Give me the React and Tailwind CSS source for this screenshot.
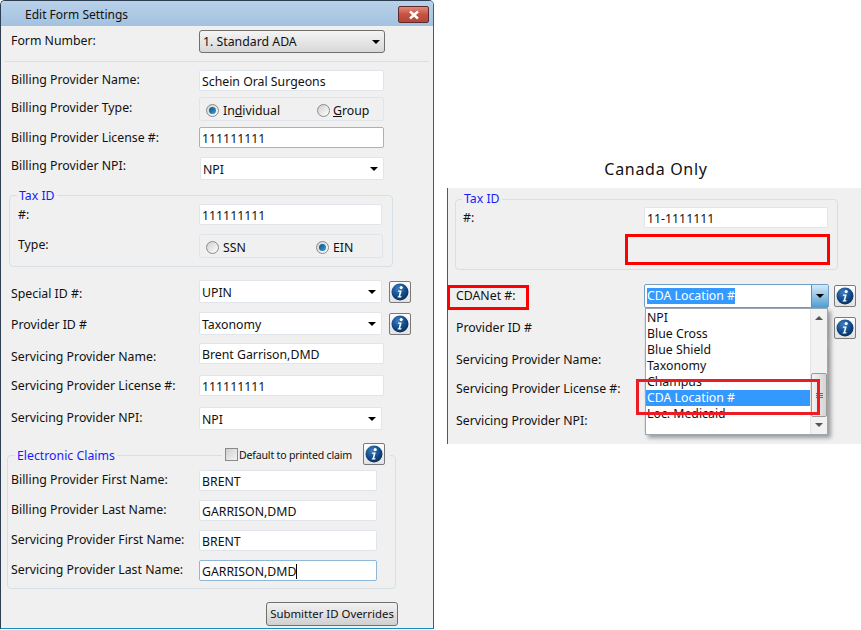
import { useId } from "react";

const ui = "font-['Noto_Sans',sans-serif] text-[12.3px] leading-[16px] text-[#111]";

function Field({ value, className = "w-[185px]", focused = false, caret = false }) {
  return (
    <div
      className={`h-[21px] bg-white rounded-[2px] border pl-[2px] leading-[21px] whitespace-nowrap ${
        focused ? "border-[#8fb8d8]" : "border-[#dfe5ea]"
      } ${className}`}
    >
      {value}
      {caret && <span className="inline-block w-px h-[15px] bg-black align-[-3px]" />}
    </div>
  );
}

function Arrow() {
  return <div className="w-0 h-0 border-x-[4px] border-x-transparent border-t-[4px] border-t-black" />;
}

function Select({ value, className = "w-[184px]" }) {
  return (
    <div
      className={`h-[23px] bg-white rounded-[2px] border border-[#dfe5ea] pl-[2px] pr-[3px] flex items-center justify-between ${className}`}
    >
      <span className="pt-[2px]">{value}</span>
      <span className="mr-[2px]">
        <Arrow />
      </span>
    </div>
  );
}

function Info({ className = "" }) {
  const id = useId();
  return (
    <div
      className={`w-[22px] h-[22px] shrink-0 rounded-[2px] border border-[#7a7a7a] bg-gradient-to-b from-white to-[#e2e2e2] flex items-center justify-center ${className}`}
    >
      <svg width="18" height="18" viewBox="0 0 18 18">
        <defs>
          <radialGradient id={id} cx="0.4" cy="0.3" r="0.8">
            <stop offset="0" stopColor="#3f7fc0" />
            <stop offset="0.6" stopColor="#0f4585" />
            <stop offset="1" stopColor="#07284f" />
          </radialGradient>
        </defs>
        <circle cx="9" cy="9" r="8.5" fill={`url(#${id})`} />
        <circle cx="10.2" cy="4.6" r="1.6" fill="#fff" />
        <path d="M7 7.6h3.7L9.2 13.2h1.4l-.3 1.2H6.6l.3-1.2h.8l1-4.4H6.8z" fill="#fff" />
      </svg>
    </div>
  );
}

function Radio({ checked }) {
  return (
    <div className="w-[13px] h-[13px] rounded-full border border-[#8a8a8a] bg-gradient-to-br from-[#d0d0d0] to-white flex items-center justify-center">
      {checked && <div className="w-[7px] h-[7px] rounded-full bg-gradient-to-br from-[#0a4f80] to-[#3aa0e0]" />}
    </div>
  );
}

function RadioGroup({ children, className = "w-[185px] h-[24px]" }) {
  return (
    <div className={`rounded-[2px] border border-[#dfe5ea] bg-[#f0f0f0] pt-[2px] flex items-center ${className}`}>
      {children}
    </div>
  );
}

function Row({ label, labelClass = "w-[188px] pt-[3px]", className = "", children }) {
  return (
    <div className={`flex items-start ${className}`}>
      <div className={`shrink-0 whitespace-nowrap ${labelClass}`}>{label}</div>
      {children}
    </div>
  );
}

function Legend({ text, className }) {
  return <div className={`absolute bg-[#f0f0f0] px-[2px] text-[#1a1aff] ${className}`}>{text}</div>;
}

function TitleBar() {
  return (
    <div className="h-[25px] shrink-0 bg-gradient-to-b from-[#b9d1ea] to-[#a3c2e0] flex items-start justify-between">
      <div className="pl-[24px] pt-[6px] text-[12px]">Edit Form Settings</div>
      <div className="mt-[5px] mr-[4px] w-[31px] h-[17px] rounded-[2px] border border-[#5c2a2a] bg-gradient-to-b from-[#e08a7c] via-[#c9503f] to-[#b0483c] flex items-center justify-center">
        <svg width="12" height="10" viewBox="0 0 12 10">
          <path d="M2 1.5L10 8.5M10 1.5L2 8.5" stroke="#fff" strokeWidth="2.4" fill="none" />
        </svg>
      </div>
    </div>
  );
}

function EditWindow() {
  return (
    <div className="w-[434px] h-[629px] shrink-0 rounded-t-[5px] border border-[#2c3e50] border-r-[#0e6f9c] border-b-[#0e8fc0] bg-[#f0f0f0] flex flex-col overflow-hidden">
      <TitleBar />
      <div className="pl-[10px] pt-[4px]">
        <Row label="Form Number:">
          <div className="w-[186px] h-[23px] rounded-[3px] border border-[#6f6f6f] bg-gradient-to-b from-[#f4f4f4] to-[#d8d8d8] pl-[3px] pr-[4px] flex items-center justify-between">
            <span>1. Standard ADA</span>
            <Arrow />
          </div>
        </Row>
      </div>
      <div className="h-px bg-[#d5dfe5] mt-[8px] mx-[4px]" />
      <div className="pl-[10px] pt-[8px]">
        <Row label="Billing Provider Name:" labelClass="w-[188px] pt-[2px]">
          <Field value="Schein Oral Surgeons" />
        </Row>
        <Row label="Billing Provider Type:" className="mt-[6px]">
          <RadioGroup>
            <span className="ml-[6px]">
              <Radio checked />
            </span>
            <span className="ml-[4px] w-[94px] pt-[2px]">
              In<u>d</u>ividual
            </span>
            <Radio />
            <span className="ml-[3px] pt-[2px]">
              <u>G</u>roup
            </span>
          </RadioGroup>
        </Row>
        <Row label="Billing Provider License #:" className="mt-[6px]">
          <Field value="111111111" focused />
        </Row>
        <Row label="Billing Provider NPI:" labelClass="w-[189px] pt-[1px]" className="mt-[9px]">
          <Select value="NPI" />
        </Row>
      </div>
      <div className="relative ml-[8px] mt-[15px] w-[384px] h-[72px] rounded-[4px] border border-[#d5dfe5] pl-[8px] pt-[8px]">
        <Legend text="Tax ID" className="left-[7px] -top-[8px]" />
        <Row label="#:" labelClass="w-[181px] pt-[3px]">
          <Field value="111111111" className="w-[183px]" />
        </Row>
        <Row label="Type:" labelClass="w-[181px] pt-[3px]" className="mt-[9px]">
          <RadioGroup className="w-[184px] h-[24px]">
            <span className="ml-[6px]">
              <Radio />
            </span>
            <span className="ml-[4px] w-[93px] pt-[2px]">SSN</span>
            <Radio checked />
            <span className="ml-[4px] pt-[2px]">EIN</span>
          </RadioGroup>
        </Row>
      </div>
      <div className="pl-[10px] pt-[13px]">
        <Row label="Special ID #:" labelClass="w-[188px] pt-[6px]">
          <Select value="UPIN" className="w-[183px]" />
          <Info className="ml-[7px] mt-[1px]" />
        </Row>
        <Row label="Provider ID #" labelClass="w-[188px] pt-[5px]" className="mt-[9px]">
          <Select value="Taxonomy" className="w-[183px]" />
          <Info className="ml-[7px] mt-[1px]" />
        </Row>
        <Row label="Servicing Provider Name:" labelClass="w-[188px] pt-[6px]" className="mt-[8px]">
          <Field value="Brent Garrison,DMD" />
        </Row>
        <Row label="Servicing Provider License #:" labelClass="w-[188px] pt-[3px]" className="mt-[10px]">
          <Field value="111111111" />
        </Row>
        <Row label="Servicing Provider NPI:" labelClass="w-[188px] pt-[3px]" className="mt-[11px]">
          <Select value="NPI" className="w-[183px]" />
        </Row>
      </div>
      <div className="relative ml-[6px] mt-[25px] w-[389px] h-[134px] rounded-[4px] border border-[#d5dfe5] pl-[3px] pt-[14px]">
        <Legend text="Electronic Claims" className="left-[7px] -top-[8px]" />
        <div className="absolute left-[214px] -top-[9px] w-[168px] h-[22px] flex items-start bg-[#f0f0f0] pl-[3px]">
          <div className="mt-[1px] w-[13px] h-[13px] border border-[#8a8a8a] bg-gradient-to-br from-[#d0d0d0] to-[#f4f4f4]" />
          <span className="ml-[1px] w-[124px] text-[10.6px] tracking-[-0.2px] whitespace-nowrap">Default to printed claim</span>
          <Info className="-mt-[4px]" />
        </div>
        <Row label="Billing Provider First Name:" labelClass="w-[188px] pt-[2px]">
          <Field value="BRENT" className="w-[178px]" />
        </Row>
        <Row label="Billing Provider Last Name:" labelClass="w-[188px] pt-[2px]" className="mt-[9px]">
          <Field value="GARRISON,DMD" className="w-[178px]" />
        </Row>
        <Row label="Servicing Provider First Name:" labelClass="w-[188px] pt-[2px]" className="mt-[9px]">
          <Field value="BRENT" className="w-[178px]" />
        </Row>
        <Row label="Servicing Provider Last Name:" labelClass="w-[188px] pt-[2px]" className="mt-[9px]">
          <Field value="GARRISON,DMD" className="w-[178px]" focused caret />
        </Row>
      </div>
      <div className="flex justify-end pr-[35px] mt-[13px]">
        <div className="w-[132px] h-[24px] rounded-[3px] border border-[#707070] bg-gradient-to-b from-[#f2f2f2] to-[#d0d0d0] flex items-center justify-center text-[11.4px] whitespace-nowrap">
          Submitter ID Overrides
        </div>
      </div>
    </div>
  );
}

function DropdownList() {
  const items = ["NPI", "Blue Cross", "Blue Shield", "Taxonomy", "Champus", "CDA Location #", "Loc. Medicaid"];
  return (
    <div className="absolute left-[197px] top-[120px] w-[183px] h-[127px] bg-white border border-[#9aa7b3] shadow-[3px_3px_4px_rgba(0,0,0,0.35)] flex">
      <div className="flex-1 pt-[1px]">
        {items.map((item) => (
          <div
            key={item}
            className={`h-[16px] pl-[1px] leading-[16px] ${item === "CDA Location #" ? "bg-[#3399ff] text-white" : ""}`}
          >
            {item}
          </div>
        ))}
      </div>
      <div className="w-[17px] bg-[#f2f2f2] border-l border-[#e4e4e4] flex flex-col items-center justify-between py-[7px] relative">
        <div className="w-0 h-0 border-x-[4px] border-x-transparent border-b-[4px] border-b-[#555]" />
        <div className="absolute left-0 top-[64px] w-[16px] h-[44px] rounded-[2px] border border-[#9a9a9a] bg-gradient-to-r from-[#f4f4f4] to-[#d4d4d4] flex flex-col items-center justify-center gap-px">
          <div className="w-[7px] h-px bg-[#666]" />
          <div className="w-[7px] h-px bg-[#666]" />
          <div className="w-[7px] h-px bg-[#666]" />
        </div>
        <div className="w-0 h-0 border-x-[4px] border-x-transparent border-t-[4px] border-t-[#555]" />
      </div>
    </div>
  );
}

function CanadaPanel() {
  return (
    <div className="ml-[13px] flex-1 flex flex-col">
      <div className="h-[188px] flex items-end justify-center pb-[9px] pl-[4px] text-[16px] leading-[20px] tracking-[0.7px]">
        Canada Only
      </div>
      <div className="relative h-[256px] bg-[#f0f0f0] border-l border-[#4a5a6a] pt-[11px]">
        <div className="relative ml-[7px] w-[383px] h-[71px] rounded-[4px] border border-[#d5dfe5] pl-[7px] pt-[7px]">
          <Legend text="Tax ID" className="left-[6px] -top-[9px]" />
          <Row label="#:" labelClass="w-[181px] pt-[3px]">
            <Field value="11-1111111" className="w-[184px]" />
          </Row>
        </div>
        <div className="pl-[8px] pt-[14px]">
          <Row label="CDANet #:" labelClass="w-[188px] pt-[4px]">
            <div className="w-[185px] h-[24px] bg-white rounded-[2px] border border-[#6f9fc4] pl-[2px] flex items-center justify-between">
              <span className="bg-[#3399ff] text-white">CDA Location #</span>
              <div className="w-[17px] h-full border-l border-[#5f8fb5] bg-gradient-to-b from-[#d4eaf8] to-[#4f9fd0] flex items-center justify-center">
                <Arrow />
              </div>
            </div>
            <Info className="ml-[5px] mt-[1px]" />
          </Row>
          <Row label="Provider ID #" labelClass="w-[188px] pt-[4px]" className="mt-[8px]">
            <Select value="" className="w-[185px]" />
            <Info className="ml-[5px] mt-[1px]" />
          </Row>
          <Row label="Servicing Provider Name:" labelClass="w-[188px] pt-[5px]" className="mt-[8px]">
            <Field value="" />
          </Row>
          <Row label="Servicing Provider License #:" labelClass="w-[188px] pt-[3px]" className="mt-[10px]">
            <Field value="" />
          </Row>
          <Row label="Servicing Provider NPI:" labelClass="w-[188px] pt-[3px]" className="mt-[11px]">
            <Select value="" />
          </Row>
        </div>
        <DropdownList />
        <div className="absolute left-[177px] top-[46px] w-[205px] h-[31px] border-[3px] border-[#ff0000]" />
        <div className="absolute -left-px top-[97px] w-[82px] h-[25px] border-[3px] border-[#ff0000]" />
        <div className="absolute left-[188px] top-[191px] w-[184px] h-[36px] border-[3px] border-[#ed1c24]" />
      </div>
    </div>
  );
}

export default function App() {
  return (
    <div className={`w-[861px] h-[630px] bg-white flex overflow-hidden ${ui}`}>
      <EditWindow />
      <CanadaPanel />
    </div>
  );
}
